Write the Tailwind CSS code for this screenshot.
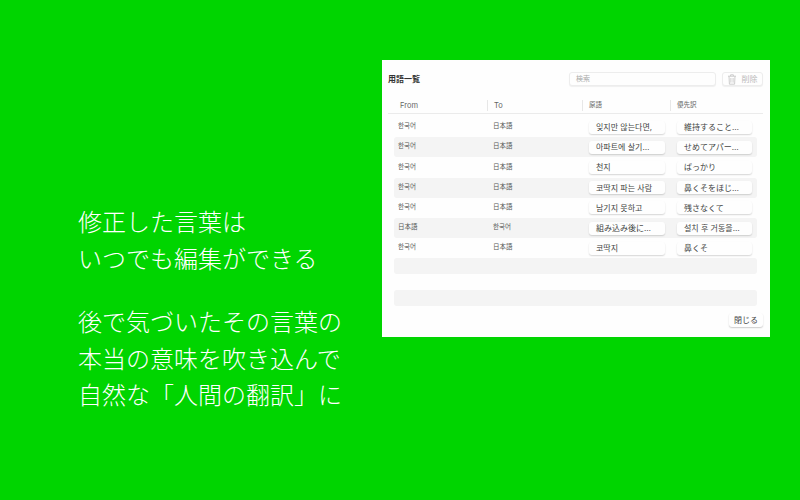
<!DOCTYPE html>
<html lang="ja">
<head>
<meta charset="utf-8">
<script src="https://cdn.jsdelivr.net/npm/@tailwindcss/browser@4"></script>
</head>
<body class="m-0">
<div class="w-[800px] h-[500px] bg-[#00d500] flex overflow-hidden font-['Inter','Noto_Sans_CJK_JP',sans-serif]">
  <div class="w-[382px] shrink-0 pl-[78px] pt-[205px] text-white text-[24px] leading-[36.6px] font-light whitespace-nowrap">
    <p>修正した言葉は</p>
    <p>いつでも編集ができる</p>
    <p class="mt-[27px]">後で気づいたその言葉の</p>
    <p>本当の意味を吹き込んで</p>
    <p>自然な「人間の翻訳」に</p>
  </div>
  <div class="w-[388px] h-[277px] mt-[60px] bg-white flex flex-col text-[#555] opacity-[0.995]">
    <div class="h-[26px] mt-[6px] pl-[6px] pr-[7px] flex items-center">
      <span class="text-[8px] font-bold text-[#333] w-[181px]">用語一覧</span>
      <div class="w-[147px] h-[14px] rounded-[3px] bg-white border border-[#eee] shadow-[0_1px_1px_rgba(0,0,0,0.06)] pl-[6px] flex items-center text-[7px] text-[#aaa]">検索</div>
      <div class="ml-[6px] w-[41px] h-[14px] rounded-[3px] bg-white border border-[#eee] shadow-[0_1px_1px_rgba(0,0,0,0.06)] flex items-center justify-center gap-[6px] text-[8px] text-[#bbb]">
        <svg width="8" height="11" viewBox="0 0 8 11" fill="none" stroke="#c8c8c8" stroke-width="0.9"><path d="M0 2.2h8M2.6 2.2V0.8h2.8V2.2M1 2.2l.4 8h5.2l.4-8M2.9 4v4.6M5.1 4v4.6"/></svg>
        <span>削除</span>
      </div>
    </div>
    <div class="mt-[6px] mx-[6px] w-[375px] h-[16px] border-b border-[#ececec] flex items-center text-[6.5px] text-[#666]">
      <div class="w-[100px] h-[11px] pl-[12px] flex items-center border-r border-[#e8e8e8]"><span class="text-[7.5px]">From</span></div>
      <div class="w-[95px] h-[11px] pl-[6px] flex items-center border-r border-[#e8e8e8]"><span class="text-[7.5px]">To</span></div>
      <div class="w-[88px] h-[11px] pl-[6px] flex items-center border-r border-[#e8e8e8]">原語</div>
      <div class="pl-[6px]">優先訳</div>
    </div>
    <div class="mt-[3px] ml-[12px] w-[363px] flex flex-col text-[6.5px]">
      <div class="h-[20.2px] flex items-center rounded-[3px]">
        <span class="w-[99px] pl-[4px]">한국어</span><span class="w-[96px]">日本語</span>
        <span class="w-[76px] h-[13px] rounded-[3px] bg-white shadow-[0_1px_1.5px_rgba(0,0,0,0.16)] pl-[7px] flex items-center text-[8px] text-[#444] truncate">잊지만 않는다면,</span>
        <span class="ml-[12px] w-[75px] h-[13px] rounded-[3px] bg-white shadow-[0_1px_1.5px_rgba(0,0,0,0.16)] pl-[7px] flex items-center text-[8px] text-[#444]">維持すること…</span>
      </div>
      <div class="h-[20.2px] flex items-center rounded-[3px] bg-[#f5f5f5]">
        <span class="w-[99px] pl-[4px]">한국어</span><span class="w-[96px]">日本語</span>
        <span class="w-[76px] h-[13px] rounded-[3px] bg-white shadow-[0_1px_1.5px_rgba(0,0,0,0.16)] pl-[7px] flex items-center text-[8px] text-[#444]">아파트에 살기…</span>
        <span class="ml-[12px] w-[75px] h-[13px] rounded-[3px] bg-white shadow-[0_1px_1.5px_rgba(0,0,0,0.16)] pl-[7px] flex items-center text-[8px] text-[#444]">せめてアパー…</span>
      </div>
      <div class="h-[20.2px] flex items-center rounded-[3px]">
        <span class="w-[99px] pl-[4px]">한국어</span><span class="w-[96px]">日本語</span>
        <span class="w-[76px] h-[13px] rounded-[3px] bg-white shadow-[0_1px_1.5px_rgba(0,0,0,0.16)] pl-[7px] flex items-center text-[8px] text-[#444]">천지</span>
        <span class="ml-[12px] w-[75px] h-[13px] rounded-[3px] bg-white shadow-[0_1px_1.5px_rgba(0,0,0,0.16)] pl-[7px] flex items-center text-[8px] text-[#444]">ばっかり</span>
      </div>
      <div class="h-[20.2px] flex items-center rounded-[3px] bg-[#f5f5f5]">
        <span class="w-[99px] pl-[4px]">한국어</span><span class="w-[96px]">日本語</span>
        <span class="w-[76px] h-[13px] rounded-[3px] bg-white shadow-[0_1px_1.5px_rgba(0,0,0,0.16)] pl-[7px] flex items-center text-[8px] text-[#444]">코딱지 파는 사람</span>
        <span class="ml-[12px] w-[75px] h-[13px] rounded-[3px] bg-white shadow-[0_1px_1.5px_rgba(0,0,0,0.16)] pl-[7px] flex items-center text-[8px] text-[#444]">鼻くそをほじ…</span>
      </div>
      <div class="h-[20.2px] flex items-center rounded-[3px]">
        <span class="w-[99px] pl-[4px]">한국어</span><span class="w-[96px]">日本語</span>
        <span class="w-[76px] h-[13px] rounded-[3px] bg-white shadow-[0_1px_1.5px_rgba(0,0,0,0.16)] pl-[7px] flex items-center text-[8px] text-[#444]">남기지 못하고</span>
        <span class="ml-[12px] w-[75px] h-[13px] rounded-[3px] bg-white shadow-[0_1px_1.5px_rgba(0,0,0,0.16)] pl-[7px] flex items-center text-[8px] text-[#444]">残さなくて</span>
      </div>
      <div class="h-[20.2px] flex items-center rounded-[3px] bg-[#f5f5f5]">
        <span class="w-[99px] pl-[4px]">日本語</span><span class="w-[96px]">한국어</span>
        <span class="w-[76px] h-[13px] rounded-[3px] bg-white shadow-[0_1px_1.5px_rgba(0,0,0,0.16)] pl-[7px] flex items-center text-[8px] text-[#444]">組み込み後に…</span>
        <span class="ml-[12px] w-[75px] h-[13px] rounded-[3px] bg-white shadow-[0_1px_1.5px_rgba(0,0,0,0.16)] pl-[7px] flex items-center text-[8px] text-[#444]">설치 후 거동을…</span>
      </div>
      <div class="h-[20.2px] flex items-center rounded-[3px]">
        <span class="w-[99px] pl-[4px]">한국어</span><span class="w-[96px]">日本語</span>
        <span class="w-[76px] h-[13px] rounded-[3px] bg-white shadow-[0_1px_1.5px_rgba(0,0,0,0.16)] pl-[7px] flex items-center text-[8px] text-[#444]">코딱지</span>
        <span class="ml-[12px] w-[75px] h-[13px] rounded-[3px] bg-white shadow-[0_1px_1.5px_rgba(0,0,0,0.16)] pl-[7px] flex items-center text-[8px] text-[#444]">鼻くそ</span>
      </div>
      <div class="h-[16px] rounded-[3px] bg-[#f5f5f5]"></div>
      <div class="h-[16px] mt-[16px] rounded-[3px] bg-[#f5f5f5]"></div>
    </div>
    <div class="mt-[7px] mr-[7px] self-end w-[34px] h-[14px] rounded-[3px] bg-white shadow-[0_1px_1.5px_rgba(0,0,0,0.2)] flex items-center justify-center text-[8px] text-[#444]">閉じる</div>
  </div>
</div>
</body>
</html>
